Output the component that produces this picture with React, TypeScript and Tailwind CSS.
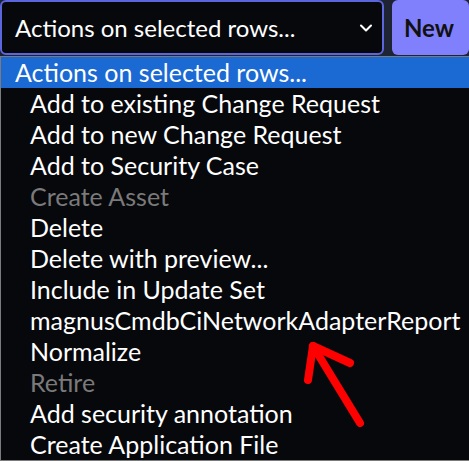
import { ChevronDown } from "lucide-react";

const options: { label: string; disabled?: boolean }[] = [
  { label: "Add to existing Change Request" },
  { label: "Add to new Change Request" },
  { label: "Add to Security Case" },
  { label: "Create Asset", disabled: true },
  { label: "Delete" },
  { label: "Delete with preview..." },
  { label: "Include in Update Set" },
  { label: "magnusCmdbCiNetworkAdapterReport" },
  { label: "Normalize" },
  { label: "Retire", disabled: true },
  { label: "Add security annotation" },
  { label: "Create Application File" },
];

export default function App() {
  return (
    <div className="relative w-[469px] h-[461px] overflow-hidden bg-[#1f2435] font-['Lato',sans-serif]">
      {/* top bar */}
      <div className="flex gap-2 h-[56px]">
        <div className="w-[384px] h-[55px] rounded-md border-2 border-[#5b66dc] bg-[#07080c] flex items-center justify-between pl-[13px] pr-[6px]">
          <span className="text-[24px] text-white">Actions on selected rows...</span>
          <ChevronDown className="w-5 h-5 text-white" strokeWidth={2.5} />
        </div>
        <button className="flex-1 h-[55px] rounded-md bg-[#8080fc] flex items-center pl-[12px] text-[24px] font-bold text-[#111]">
          New
        </button>
      </div>

      {/* open list */}
      <div className="w-[480px] border border-[#7b7b7b] bg-[#07080c]">
        <div className="h-[31px] bg-[#1b69d3] pl-[14px] flex items-center text-[25px] text-white">
          Actions on selected rows...
        </div>
        {options.map((o) => (
          <div
            key={o.label}
            className={`h-[31px] pl-[29px] flex items-center text-[25px] whitespace-nowrap ${
              o.disabled ? "text-[#7a7a7a]" : "text-white"
            }`}
          >
            {o.label}
          </div>
        ))}
      </div>

      {/* red annotation arrow */}
      <svg className="absolute left-0 top-0" width="469" height="461">
        <g stroke="#ff0000" strokeWidth="8" strokeLinecap="round" strokeLinejoin="round" fill="none">
          <path d="M360 423 L313 346" />
          <path d="M308 380 L313 346 L350 363" />
        </g>
      </svg>
    </div>
  );
}
